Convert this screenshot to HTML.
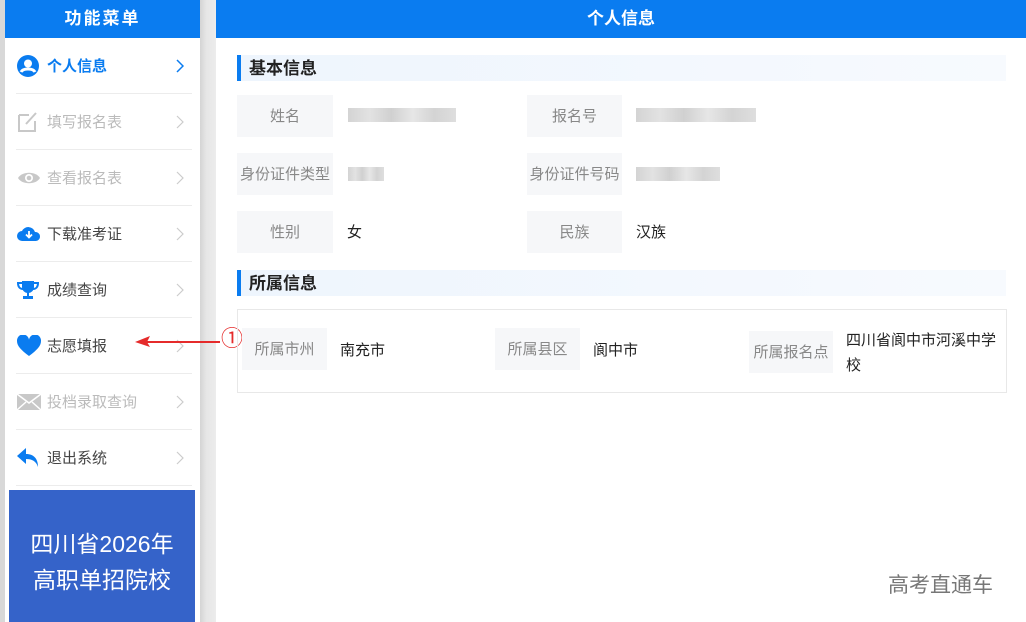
<!DOCTYPE html>
<html><head><meta charset="utf-8"><style>
*{margin:0;padding:0;box-sizing:border-box}
body{width:1026px;height:622px;overflow:hidden;background:#fff;font-family:"Liberation Sans","Noto Sans CJK SC",sans-serif;position:relative}
.a{position:absolute}
.gap{left:0;top:0;width:5px;height:622px;background:#d8d8d8}
.gap2{left:200px;top:0;width:16px;height:622px;background:linear-gradient(90deg,#d4d4d4,#e6e6e6 40%,#ececec)}
.sh{left:5px;top:0;width:195px;height:38px;background:#0a7cf0;color:#fff;font-size:17px;font-weight:bold;text-align:center;line-height:38px;letter-spacing:2px}
.mi{left:16px;width:176px;height:56px;border-bottom:1px solid #ececec;font-size:15px;color:#555}
.mi span.t{position:absolute;left:31px;top:19px;line-height:20px}
.mi .ar{position:absolute;left:160px;top:21px}
.mi svg.ic{position:absolute;left:1px;top:17px}
.box{left:9px;top:490px;width:186px;height:132px;background:#3563c9;color:#fff;font-size:23px;text-align:center;line-height:36px;padding-top:36px}
.mh{left:216px;top:0;width:810px;height:38px;background:#0a7cf0;color:#fff;font-size:17px;font-weight:bold;text-align:center;line-height:38px}
.sec{left:237px;width:769px;height:26px;background:linear-gradient(90deg,#eef5fd,#f7fafe);border-left:4px solid #0a7cf0;font-size:17px;font-weight:bold;color:#222;padding-left:8px;line-height:28px}
.lb{background:#f6f7f9;color:#888;font-size:15px;text-align:center;height:42px;line-height:44px}
.v{font-size:15px;color:#222;line-height:20px}
.blur{height:14px;background:linear-gradient(90deg,#ccc,#ddd,#c8c8c8,#e2e2e2,#ccc,#d8d8d8);opacity:.85}
</style></head><body>
<div class="a gap"></div><div class="a gap2"></div>
<div class="a sh">功能菜单</div>

<div class="a mi" style="top:38px;color:#0a7cf0;font-weight:bold"><svg class="ic" width="22" height="22" viewBox="0 0 22 22"><circle cx="11" cy="11" r="11" fill="#0a7cf0"/><circle cx="11" cy="8.5" r="4" fill="#fff"/><path d="M4 17c2-4 12-4 14 0" stroke="#fff" stroke-width="3" fill="none"/></svg><span class="t">个人信息</span><svg class="ar" width="8" height="14"><path d="M1 1l6 6-6 6" stroke="#0a7cf0" stroke-width="1.5" fill="none"/></svg></div>
<div class="a mi" style="top:94px;color:#bbb"><svg class="ic" width="22" height="22" viewBox="0 0 22 22"><path d="M2 4h10M2 4v16h16V10" stroke="#c8c8c8" stroke-width="2" fill="none"/><path d="M9 13l10-11" stroke="#c8c8c8" stroke-width="2"/></svg><span class="t">填写报名表</span><svg class="ar" width="8" height="14"><path d="M1 1l6 6-6 6" stroke="#ccc" stroke-width="1.2" fill="none"/></svg></div>
<div class="a mi" style="top:150px;color:#bbb"><svg class="ic" width="24" height="22" viewBox="0 0 24 22"><path d="M1 11C5 4 19 4 23 11C19 18 5 18 1 11Z" fill="#c8c8c8"/><circle cx="12" cy="11" r="4" fill="#fff"/><circle cx="12" cy="11" r="2.3" fill="#c8c8c8"/></svg><span class="t">查看报名表</span><svg class="ar" width="8" height="14"><path d="M1 1l6 6-6 6" stroke="#ccc" stroke-width="1.2" fill="none"/></svg></div>
<div class="a mi" style="top:206px;color:#444"><svg class="ic" width="24" height="22" viewBox="0 0 24 22"><path d="M5 18a5 5 0 0 1 0-10a7 7 0 0 1 13 1a4.5 4.5 0 0 1 1 9Z" fill="#0a7cf0"/><path d="M12 8v6M9 11.5l3 3 3-3" stroke="#fff" stroke-width="1.8" fill="none"/></svg><span class="t">下载准考证</span><svg class="ar" width="8" height="14"><path d="M1 1l6 6-6 6" stroke="#ccc" stroke-width="1.2" fill="none"/></svg></div>
<div class="a mi" style="top:262px;color:#444"><svg class="ic" width="22" height="22" viewBox="0 0 22 22"><path d="M5 2h12v6a6 6 0 0 1-12 0Z" fill="#0a7cf0"/><path d="M5 4H1c0 4 2 6 5 6M17 4h4c0 4-2 6-5 6" stroke="#0a7cf0" stroke-width="2" fill="none"/><rect x="10" y="13" width="2" height="4" fill="#0a7cf0"/><rect x="6" y="17" width="10" height="3" fill="#0a7cf0"/></svg><span class="t">成绩查询</span><svg class="ar" width="8" height="14"><path d="M1 1l6 6-6 6" stroke="#ccc" stroke-width="1.2" fill="none"/></svg></div>
<div class="a mi" style="top:318px;color:#444"><svg class="ic" width="24" height="22" viewBox="0 0 24 22"><path d="M12 21C4 15 0 11 0 6a6 6 0 0 1 12-1a6 6 0 0 1 12 1c0 5-4 9-12 15Z" fill="#0a7cf0"/></svg><span class="t">志愿填报</span><svg class="ar" width="8" height="14"><path d="M1 1l6 6-6 6" stroke="#ccc" stroke-width="1.2" fill="none"/></svg></div>
<div class="a mi" style="top:374px;color:#bbb"><svg class="ic" width="24" height="22" viewBox="0 0 24 22"><rect x="0" y="3" width="24" height="16" fill="#c8c8c8"/><path d="M0 3l12 9 12-9M0 19l9-8M24 19l-9-8" stroke="#fff" stroke-width="1.5" fill="none"/></svg><span class="t">投档录取查询</span><svg class="ar" width="8" height="14"><path d="M1 1l6 6-6 6" stroke="#ccc" stroke-width="1.2" fill="none"/></svg></div>
<div class="a mi" style="top:430px;color:#444"><svg class="ic" width="22" height="22" viewBox="0 0 22 22"><path d="M9 1L0 9l9 8v-5c6 0 10 2 12 8c0-8-4-13-12-13Z" fill="#0a7cf0"/></svg><span class="t">退出系统</span><svg class="ar" width="8" height="14"><path d="M1 1l6 6-6 6" stroke="#ccc" stroke-width="1.2" fill="none"/></svg></div>
<div class="a box">四川省2026年<br>高职单招院校</div>

<svg class="a" style="left:130px;top:332px" width="100" height="20"><path d="M90 10H16" stroke="#e52b2b" stroke-width="2"/><path d="M5 10l15-6-3 6 3 5Z" fill="#e52b2b"/></svg>
<div class="a" style="left:221px;top:326px;color:#e52b2b;font-size:22px;line-height:26px">①</div>

<div class="a mh">个人信息</div>
<div class="a sec" style="top:55px">基本信息</div>
<div class="a lb" style="left:237px;top:95px;width:96px">姓名</div>
<div class="a blur" style="left:348px;top:108px;width:108px"></div>
<div class="a lb" style="left:527px;top:95px;width:95px">报名号</div>
<div class="a blur" style="left:636px;top:108px;width:120px"></div>
<div class="a lb" style="left:237px;top:153px;width:96px">身份证件类型</div>
<div class="a blur" style="left:348px;top:167px;width:36px"></div>
<div class="a lb" style="left:527px;top:153px;width:95px">身份证件号码</div>
<div class="a blur" style="left:636px;top:167px;width:84px"></div>
<div class="a lb" style="left:237px;top:211px;width:96px">性别</div>
<div class="a v" style="left:347px;top:223px">女</div>
<div class="a lb" style="left:527px;top:211px;width:95px">民族</div>
<div class="a v" style="left:636px;top:223px">汉族</div>

<div class="a sec" style="top:270px">所属信息</div>
<div class="a" style="left:237px;top:309px;width:770px;height:84px;border:1px solid #e8e8e8"></div>
<div class="a lb" style="left:242px;top:328px;width:85px">所属市州</div>
<div class="a v" style="left:340px;top:341px">南充市</div>
<div class="a lb" style="left:495px;top:328px;width:85px">所属县区</div>
<div class="a v" style="left:593px;top:341px">阆中市</div>
<div class="a lb" style="left:749px;top:331px;width:84px">所属报名点</div>
<div class="a v" style="left:846px;top:328px;width:160px;line-height:25px">四川省阆中市河溪中学校</div>

<div class="a" style="left:888px;top:569px;font-size:21px;color:#777">高考直通车</div>
</body></html>
